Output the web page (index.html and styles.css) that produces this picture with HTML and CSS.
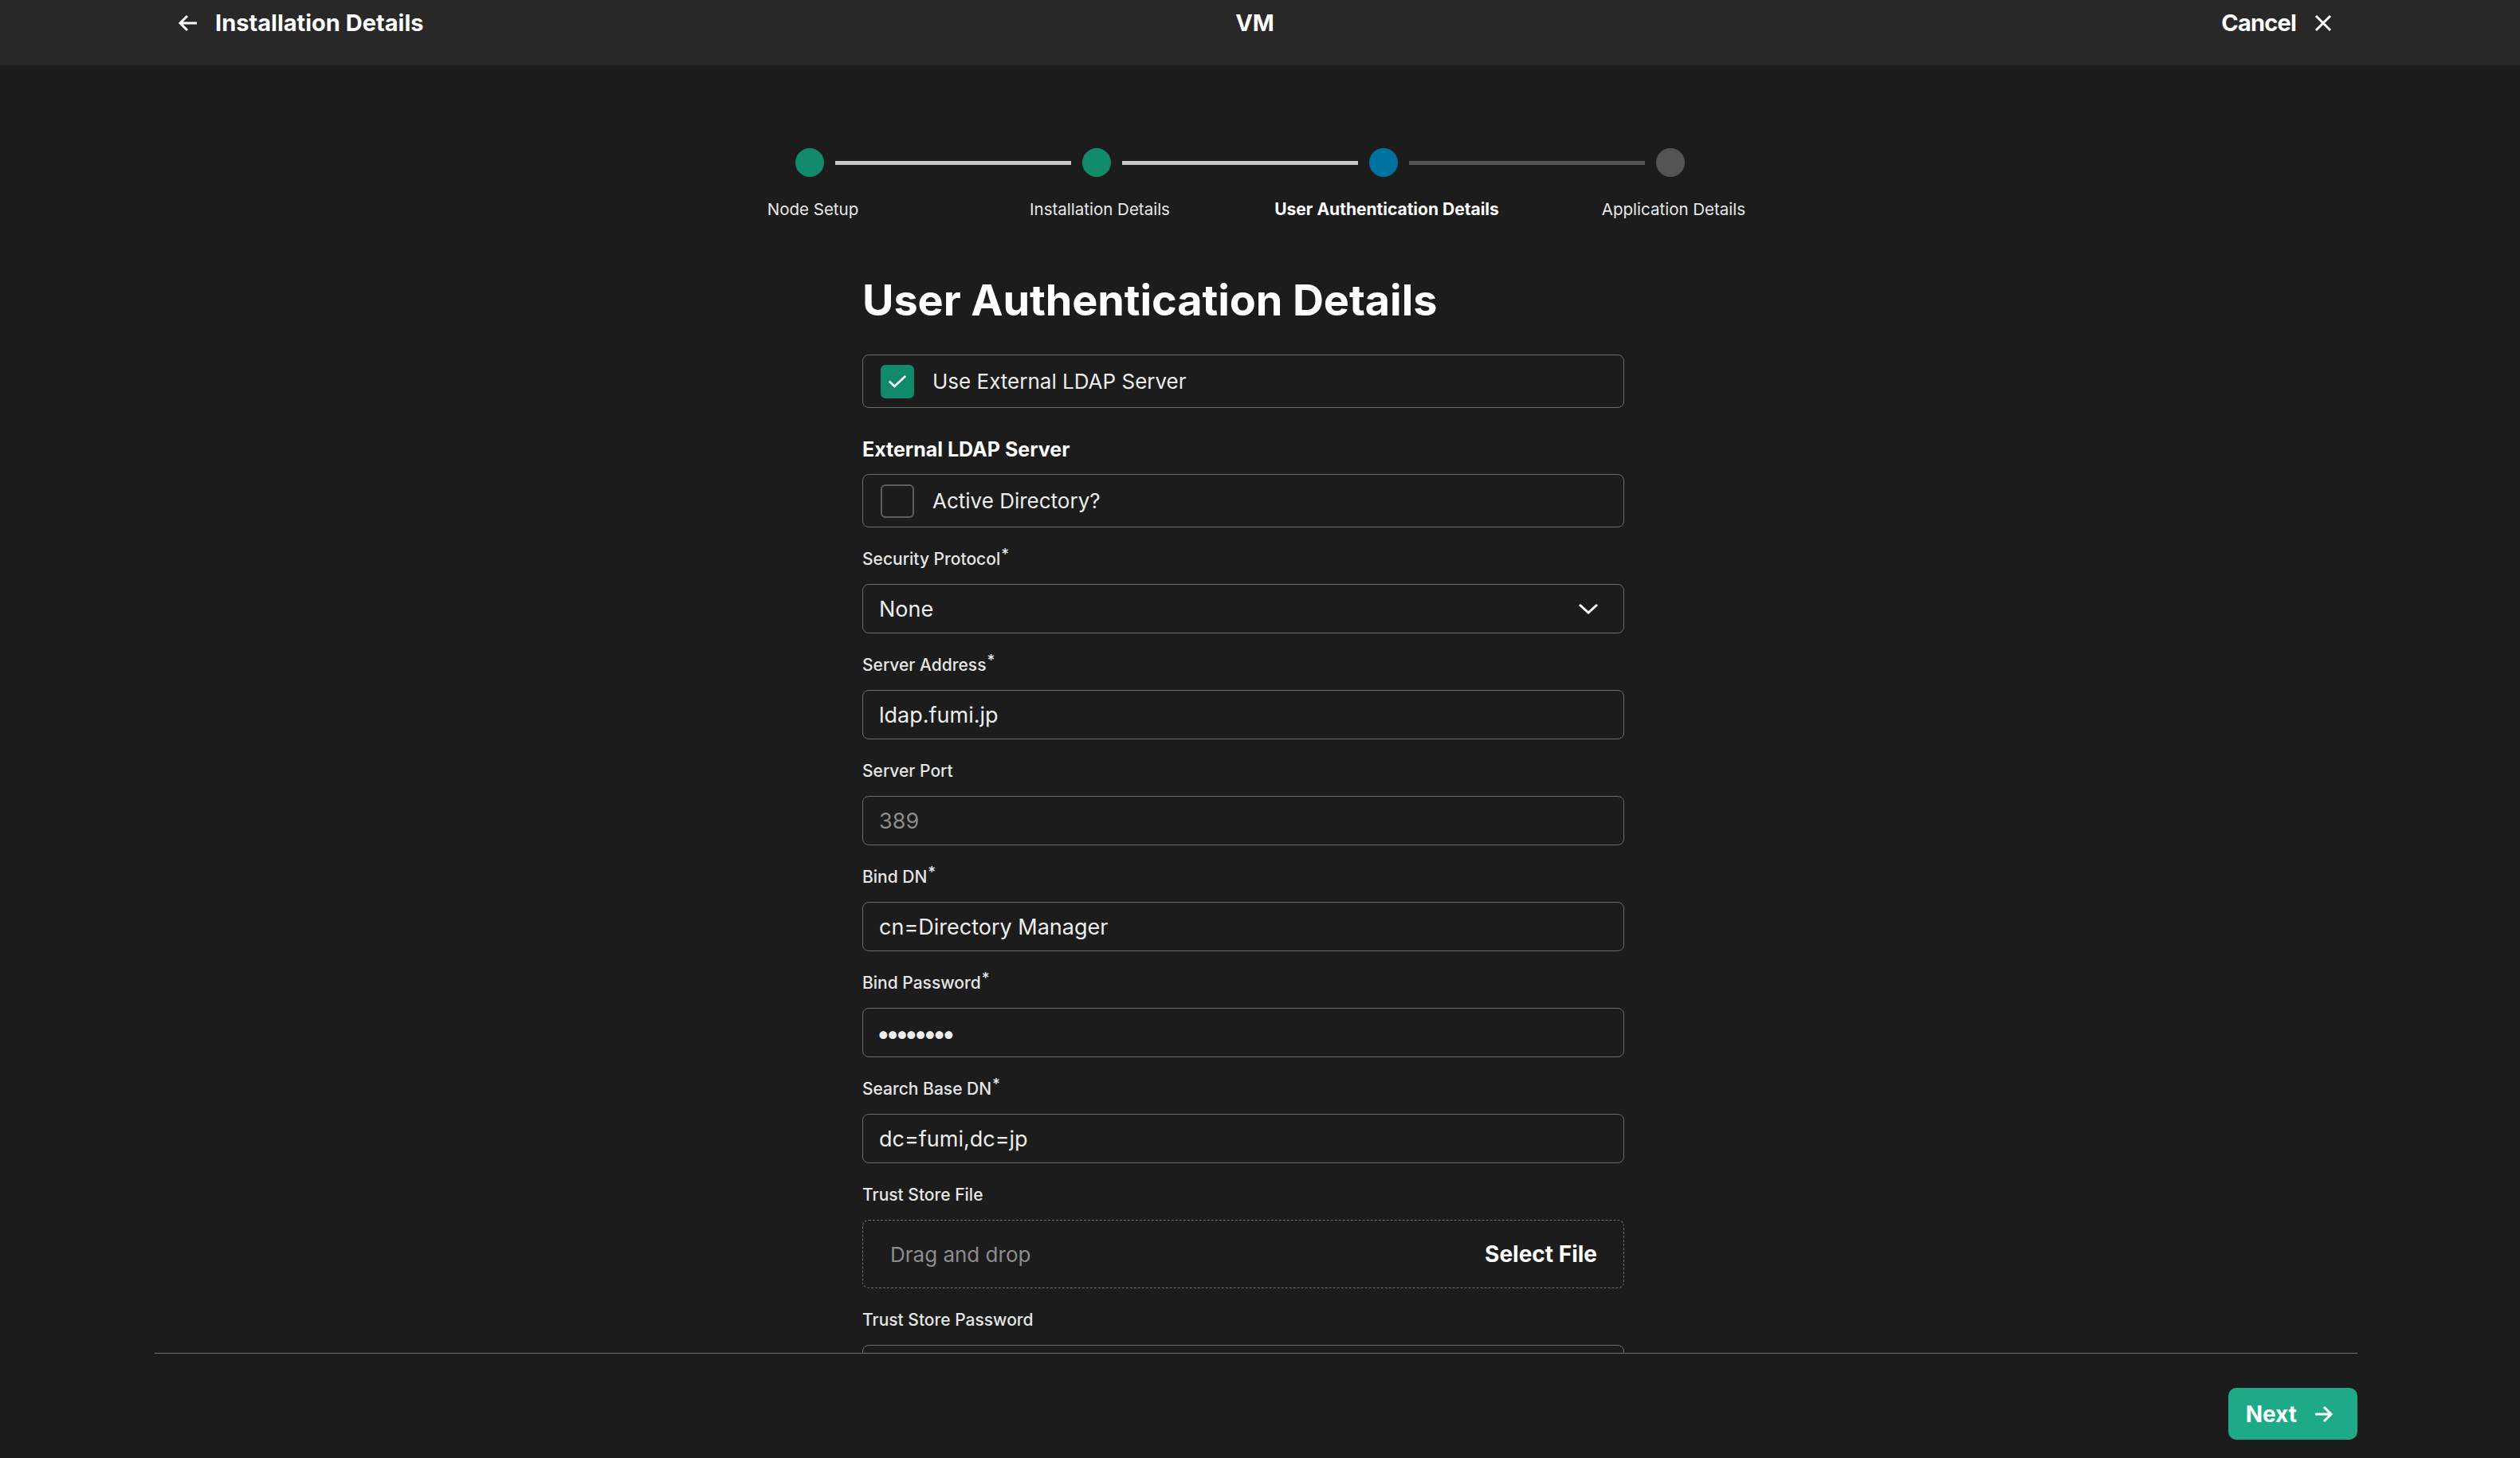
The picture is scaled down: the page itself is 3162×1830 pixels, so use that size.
FILE: index.html
```html
<!DOCTYPE html>
<html lang="en">
<head>
<meta charset="utf-8">
<title>User Authentication Details</title>
<link rel="stylesheet" href="styles.css">
</head>
<body>
<header class="topbar">
  <div class="topbar-left">
    <svg class="icon-back" viewBox="0 0 26 22" width="26" height="22" aria-hidden="true"><path d="M24 11H3M12 2 3 11l9 9" fill="none" stroke="#fff" stroke-width="3"/></svg>
    <span>Installation Details</span>
  </div>
  <div class="topbar-title">VM</div>
  <div class="topbar-right">
    <span class="cancel">Cancel</span>
    <svg class="icon-close" viewBox="0 0 22 22" width="22" height="22" aria-hidden="true"><path d="M2 2l18 18M20 2 2 20" fill="none" stroke="#fff" stroke-width="3"/></svg>
  </div>
</header>

<main class="content">
  <div class="inner">
    <div class="stepper">
      <div class="track">
        <span class="dot done"></span><span class="bar light"></span>
        <span class="dot done"></span><span class="bar light"></span>
        <span class="dot current"></span><span class="bar dark"></span>
        <span class="dot todo"></span>
      </div>
      <div class="step-labels">
        <span>Node Setup</span>
        <span>Installation Details</span>
        <span class="active">User Authentication Details</span>
        <span>Application Details</span>
      </div>
    </div>

    <form class="form">
      <h1 class="title">User Authentication Details</h1>

      <div class="check-box">
        <span class="check checked"><svg viewBox="0 0 26 18" width="24" height="17" aria-hidden="true"><path d="M2 9l7 7L24 2" fill="none" stroke="#fff" stroke-width="2.8"/></svg></span>
        <span class="check-label">Use External LDAP Server</span>
      </div>

      <div class="section-label">External LDAP Server</div>
      <div class="check-box">
        <span class="check"></span>
        <span class="check-label">Active Directory?</span>
      </div>

      <div class="field">
        <div class="label">Security Protocol<sup>*</sup></div>
        <div class="input select"><span>None</span>
          <svg viewBox="0 0 26 14" width="26" height="14" aria-hidden="true"><path d="M2 2l11 10L24 2" fill="none" stroke="#fff" stroke-width="3"/></svg>
        </div>
      </div>

      <div class="field">
        <div class="label">Server Address<sup>*</sup></div>
        <div class="input">ldap.fumi.jp</div>
      </div>

      <div class="field">
        <div class="label">Server Port</div>
        <div class="input placeholder">389</div>
      </div>

      <div class="field">
        <div class="label">Bind DN<sup>*</sup></div>
        <div class="input">cn=Directory Manager</div>
      </div>

      <div class="field">
        <div class="label">Bind Password<sup>*</sup></div>
        <div class="input password">••••••••</div>
      </div>

      <div class="field">
        <div class="label">Search Base DN<sup>*</sup></div>
        <div class="input">dc=fumi,dc=jp</div>
      </div>

      <div class="field">
        <div class="label">Trust Store File</div>
        <div class="dropzone"><span class="drop-text">Drag and drop</span><span class="select-file">Select File</span></div>
      </div>

      <div class="field">
        <div class="label">Trust Store Password</div>
        <div class="input"></div>
      </div>
    </form>
  </div>
</main>

<footer class="footer">
  <button class="next" type="button">Next
    <svg viewBox="0 0 24 22" width="24" height="22" aria-hidden="true"><path d="M1 11h20M12 2l9 9-9 9" fill="none" stroke="#fff" stroke-width="3"/></svg>
  </button>
</footer>
</body>
</html>
```

FILE: styles.css
```css
* { box-sizing: border-box; }
html, body { margin: 0; padding: 0; }
body {
  width: 3162px;
  height: 1830px;
  overflow: hidden;
  background: #1c1c1c;
  color: #f2f2f2;
  font-family: Inter, Lato, "Liberation Sans", sans-serif;
  display: flex;
  flex-direction: column;
}

/* top bar */
.topbar {
  flex: none;
  height: 82px;
  background: #282828;
  display: grid;
  grid-template-columns: 1fr auto 1fr;
  align-items: start;
  padding: 9px 236px 0 223px;
  font-weight: 700;
  font-size: 29px;
  line-height: 40px;
  color: #fff;
}
.topbar-left { display: flex; align-items: center; gap: 21px; }
.topbar-title { text-align: center; }
.topbar-right { display: flex; align-items: center; gap: 23px; justify-self: end; }
.cancel { letter-spacing: -0.8px; }

/* content */
.content {
  flex: 1;
  overflow: hidden;
  padding: 0 42px 0 0;
}
.inner { width: 1440px; margin: 0 auto; }

.stepper { padding-top: 104px; }
.track {
  display: flex;
  align-items: center;
  justify-content: center;
  padding-right: 8px;
}
.dot { width: 36px; height: 36px; border-radius: 50%; flex: none; }
.dot.done { background: #11896b; }
.dot.current { background: #0073a0; }
.dot.todo { background: #555555; }
.bar { width: 296px; height: 5px; margin: 0 14px; flex: none; }
.bar.light { background: #c6c6c6; }
.bar.dark { background: #555555; }

.step-labels {
  display: grid;
  grid-template-columns: repeat(4, 1fr);
  text-align: center;
  margin-top: 27px;
  font-size: 20.5px;
  line-height: 28px;
  color: #e8e8e8;
}
.step-labels .active { font-weight: 700; color: #fff; font-size: 21px; }

.form { width: 956px; margin: 0 auto; }
.title {
  margin: 68px 0 0;
  font-size: 54px;
  line-height: 64px;
  font-weight: 700;
  letter-spacing: -0.1px;
  color: #fff;
}

.check-box {
  height: 67px;
  border: 1px solid #6b6b6b;
  border-radius: 8px;
  display: flex;
  align-items: center;
  padding-left: 22px;
  gap: 23px;
  font-size: 26px;
}
.title + .check-box { margin-top: 36px; }
.check {
  width: 42px;
  height: 42px;
  border: 2px solid #5f5f5f;
  border-radius: 6px;
  display: flex;
  align-items: center;
  justify-content: center;
  flex: none;
}
.check.checked { background: #11896b; border-color: #11896b; }
.check-label { color: #ececec; }

.section-label {
  margin: 38px 0 17px;
  font-size: 25px;
  line-height: 28px;
  font-weight: 700;
  color: #fff;
}

.field { margin-top: 26px; }
.label {
  font-size: 21px;
  line-height: 28px;
  font-weight: 500;
  color: #e6e6e6;
  margin-bottom: 17px;
}
.label sup { font-size: 19px; line-height: 0; vertical-align: 7px; margin-left: 1px; font-weight: 500; }

.input {
  height: 62px;
  border: 1px solid #6b6b6b;
  border-radius: 8px;
  padding: 0 20px;
  display: flex;
  align-items: center;
  font-size: 27px;
  color: #ededed;
}
.input.placeholder { color: #8c8c8c; }
.input.select { justify-content: space-between; padding-right: 31px; }
.input.password { font-size: 31px; font-weight: 700; letter-spacing: -3px; padding-left: 18px; }

.dropzone {
  height: 86px;
  border: 1px dashed #6f6f6f;
  border-radius: 8px;
  display: flex;
  align-items: center;
  justify-content: space-between;
  padding: 0 33px 0 34px;
  font-size: 26px;
}
.drop-text { color: #8c8c8c; }
.select-file { font-weight: 700; color: #fff; font-size: 28px; }

/* footer */
.footer {
  flex: none;
  height: 132px;
  margin: 0 204px 0 194px;
  border-top: 1px solid #6e6e6e;
  display: flex;
  justify-content: flex-end;
  align-items: flex-start;
  padding-top: 43px;
}
.next {
  height: 65px;
  border: 0;
  border-radius: 10px;
  background: #1ea987;
  color: #fff;
  font-family: inherit;
  font-weight: 700;
  font-size: 28px;
  display: flex;
  align-items: center;
  gap: 22px;
  padding: 0 30px 0 22px;
}
```
